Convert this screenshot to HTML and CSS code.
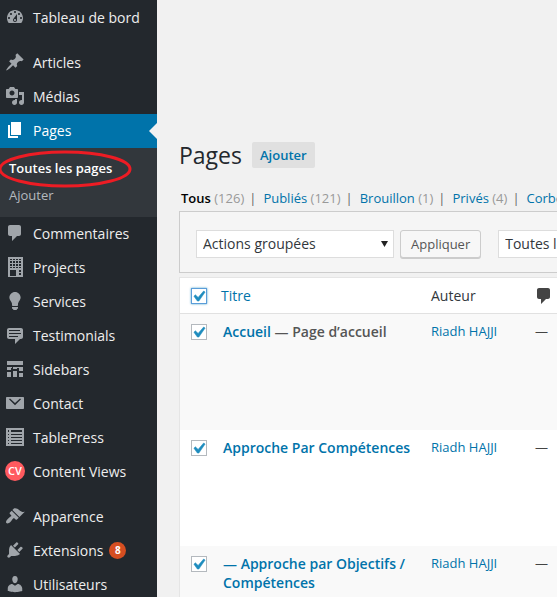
FILE: index.html
```html
<!DOCTYPE html>
<html lang="fr">
<head>
<meta charset="utf-8">
<title>Pages</title>
<meta name="viewport" content="width=device-width, initial-scale=1">
<link rel="stylesheet" href="styles.css">
</head>
<body>
<div class="layout">
  <nav class="menu" aria-label="Menu principal">
    <ul class="menu-list">
      <li><a class="item" href="#"><svg class="icon" viewBox="0 0 20 20"><path fill-rule="evenodd" d="M3.76 16h12.48c1.1-1.37 1.76-3.11 1.76-5 0-4.42-3.58-8-8-8s-8 3.58-8 8c0 1.89.66 3.63 1.76 5zM10 4c.55 0 1 .45 1 1s-.45 1-1 1-1-.45-1-1 .45-1 1-1zM6 6c.55 0 1 .45 1 1s-.45 1-1 1-1-.45-1-1 .45-1 1-1zm8 0c.55 0 1 .45 1 1s-.45 1-1 1-1-.45-1-1 .45-1 1-1zm-5.37 5.55L12 7v6c0 1.1-.9 2-2 2s-2-.9-2-2c0-.57.24-1.08.63-1.45zM4 10c.55 0 1 .45 1 1s-.45 1-1 1-1-.45-1-1 .45-1 1-1zm12 0c.55 0 1 .45 1 1s-.45 1-1 1-1-.45-1-1 .45-1 1-1zm-5 3c0-.55-.45-1-1-1s-1 .45-1 1 .45 1 1 1 1-.45 1-1z"/></svg>Tableau de bord</a></li>
      <li class="group"><a class="item" href="#"><svg class="icon" viewBox="0 0 20 20"><path d="M10.44 3.02l1.82-1.82 6.36 6.35-1.83 1.82c-1.05-.68-2.48-.57-3.41.36l-.75.75c-.92.93-1.04 2.35-.35 3.41l-1.83 1.82-2.41-2.41-2.8 2.79c-.42.42-3.38 2.71-3.8 2.29s1.86-3.39 2.28-3.81l2.79-2.79L4.1 9.36l1.83-1.82c1.05.69 2.48.57 3.4-.36l.75-.75c.93-.92 1.05-2.35.36-3.41z"/></svg>Articles</a></li>
      <li><a class="item" href="#"><svg class="icon" viewBox="0 0 20 20"><path fill-rule="evenodd" d="M13 11V4c0-.55-.45-1-1-1h-1.67L9 1H5L3.67 3H2c-.55 0-1 .45-1 1v7c0 .55.45 1 1 1h10c.55 0 1-.45 1-1zM7 4.5c1.38 0 2.5 1.12 2.5 2.5S8.38 9.5 7 9.5 4.5 8.38 4.5 7 5.62 4.5 7 4.5zM14 6h5v10.5c0 1.38-1.12 2.5-2.5 2.5S14 17.88 14 16.5s1.12-2.5 2.5-2.5c.17 0 .34.02.5.05V9h-3V6zm-4 8.05V13h2v3.5c0 1.38-1.12 2.5-2.5 2.5S7 17.88 7 16.5 8.12 14 9.5 14c.17 0 .34.02.5.05z"/></svg>Médias</a></li>
      <li>
        <a class="item current" href="#"><svg class="icon" viewBox="0 0 20 20"><path d="M6 15V2h10v13H6zm-1 1h8v2H3V5h2v11z"/></svg>Pages</a>
        <ul class="submenu">
          <li><a class="subitem active" href="#">Toutes les pages<svg class="ring" viewBox="0 0 132 38"><ellipse cx="65" cy="19" rx="65" ry="17"/></svg></a></li>
          <li><a class="subitem" href="#">Ajouter</a></li>
        </ul>
      </li>
      <li><a class="item" href="#"><svg class="icon" viewBox="0 0 20 20"><path d="M5 2h9c1.1 0 2 .9 2 2v7c0 1.1-.9 2-2 2h-2l-5 5v-5H5c-1.1 0-2-.9-2-2V4c0-1.1.9-2 2-2z"/></svg>Commentaires</a></li>
      <li><a class="item" href="#"><svg class="icon" viewBox="0 0 20 20"><path fill-rule="evenodd" d="M3 0h15v20H3zM5 2v1h2V2zM8 2v1h2V2zM11 2v1h2V2zM14 2v1h2V2zM5 4v2h2V4zM8 4v2h2V4zM11 4v2h2V4zM14 4v2h2V4zM5 7v2h2V7zM8 7v2h2V7zM11 7v2h2V7zM14 7v2h2V7zM5 10v1h2v-1zM8 10v1h2v-1zM11 10v1h2v-1zM14 10v1h2v-1zM5 13v6h6v-6zM14 13v2h2v-2zM14 16v2h2v-2z"/></svg>Projects</a></li>
      <li><a class="item" href="#"><svg class="icon" viewBox="0 0 20 20"><path d="M10 1c3.11 0 5.63 2.52 5.63 5.62 0 1.84-2.03 4.58-2.03 4.58-.33.44-.6 1.25-.6 1.8v1c0 .55-.45 1-1 1H8c-.55 0-1-.45-1-1v-1c0-.55-.27-1.36-.6-1.8 0 0-2.02-2.74-2.02-4.58C4.38 3.52 6.89 1 10 1zM7 16.87V16h6v.87c0 .62-.13 1.13-.75 1.13H12c0 .62-.4 1-1.02 1h-2c-.61 0-.98-.38-.98-1h-.25c-.62 0-.75-.51-.75-1.13z"/></svg>Services</a></li>
      <li><a class="item" href="#"><svg class="icon" viewBox="0 0 20 20"><path fill-rule="evenodd" d="M4 3h12c1.1 0 2 .9 2 2v7c0 1.1-.9 2-2 2h-1l-5 5v-5H4c-1.1 0-2-.9-2-2V5c0-1.1.9-2 2-2zm11 2H4v1h11V5zm1 3H4v1h12V8zm-3 3H4v1h9v-1z"/></svg>Testimonials</a></li>
      <li><a class="item" href="#"><svg class="icon" viewBox="0 0 20 20"><path d="M2 2h16v4H2zM2 8h4v3H2zM8 8h4v2H8zM14 8h4v4h-4zM2 13h4v5H2zM8 12h4v6H8zM14 14h4v4h-4zM6 8h1v1H6zM12 8h2v1h-2z"/></svg>Sidebars</a></li>
      <li><a class="item" href="#"><svg class="icon" viewBox="0 0 20 20"><path fill-rule="evenodd" d="M2 4h16c.6 0 1 .4 1 1v10c0 .6-.4 1-1 1H2c-.6 0-1-.4-1-1V5c0-.6.4-1 1-1zM4 6.200l6 6 6-6-1-.8-5 4.600-5-4.600z"/></svg>Contact</a></li>
      <li><a class="item" href="#"><svg class="icon" viewBox="0 0 20 20"><path fill-rule="evenodd" d="M1 1h18v18H1zM3 3v2h1V3zM6 3v2h11V3zM3 7v1h1V7zM6 7v1h11V7zM3 10v1h1v-1zM6 10v1h11v-1zM3 13v1h1v-1zM6 13v1h11v-1zM3 16v1h1v-1zM6 16v1h11v-1z"/></svg>TablePress</a></li>
      <li><a class="item" href="#"><span class="icon cv">CV</span>Content Views</a></li>
      <li class="group"><a class="item" href="#"><svg class="icon" viewBox="0 0 20 20"><path d="M14.48 11.06L7.41 3.99l1.5-1.5c.5-.56 2.3-.47 3.51.32 1.21.8 1.43 1.28 2.91 2.1 1.18.64 2.45 1.26 4.45.85zm-.71.71L6.7 4.7 4.93 6.47c-.39.39-.39 1.02 0 1.41l1.06 1.06c.39.39.39 1.03 0 1.42-.6.6-1.43 1.11-2.21 1.69-.35.26-.7.53-1.01.84C1.43 14.23.4 16.08 1.4 17.07c.99 1 2.84-.03 4.18-1.36.31-.31.58-.66.85-1.02.57-.78 1.08-1.61 1.69-2.21.39-.39 1.02-.39 1.41 0l1.06 1.06c.39.39 1.02.39 1.41 0z"/></svg>Apparence</a></li>
      <li><a class="item" href="#"><svg class="icon" viewBox="0 0 20 20"><path d="M13.11 4.36L9.87 7.6 8 5.73l3.24-3.24c.35-.34 1.05-.2 1.56.32.52.51.66 1.21.31 1.55zm-8 1.77l.91-1.12 9.01 9.01-1.19.84c-.71.71-2.63 1.16-3.82 1.16H6.14L4.9 17.26c-.59.59-1.54.59-2.12 0-.59-.58-.59-1.53 0-2.12l1.24-1.24v-3.88c0-1.13.4-3.19 1.09-3.89zm7.26 3.97l3.24-3.24c.34-.35 1.04-.21 1.55.31.52.51.66 1.21.31 1.55l-3.24 3.25z"/></svg>Extensions<span class="badge">8</span></a></li>
      <li><a class="item" href="#"><svg class="icon" viewBox="0 0 20 20"><path d="M10 9.25c-2.27 0-2.73-3.44-2.73-3.44C7 4.02 7.82 2 9.97 2c2.16 0 2.98 2.02 2.71 3.81 0 0-.41 3.44-2.68 3.44zm0 2.57L12.72 10c2.39 0 4.52 2.33 4.52 4.53v2.49s-3.65 1.13-7.24 1.13c-3.65 0-7.24-1.13-7.24-1.13v-2.49c0-2.25 1.94-4.48 4.47-4.48z"/></svg>Utilisateurs</a></li>
    </ul>
  </nav>

  <main class="content">
    <header class="heading">
      <h1>Pages</h1>
      <a class="add" href="#">Ajouter</a>
    </header>

    <ul class="filters">
      <li><a class="selected" href="#">Tous <span>(126)</span></a></li>
      <li><a href="#">Publiés <span>(121)</span></a></li>
      <li><a href="#">Brouillon <span>(1)</span></a></li>
      <li><a href="#">Privés <span>(4)</span></a></li>
      <li><a href="#">Corbeille</a></li>
    </ul>

    <form class="toolbar">
      <div class="picker">
        <select class="bulk" aria-label="Actions groupées"><option>Actions groupées</option></select>
        <svg class="arrow" viewBox="0 0 7 6"><path d="M0 0h7L3.5 6z"/></svg>
      </div>
      <button class="apply" type="button">Appliquer</button>
      <select class="dates" aria-label="Filtrer par date"><option>Toutes les dates</option></select>
    </form>

    <table class="pages">
      <colgroup><col class="col-check"><col class="col-title"><col class="col-author"><col></colgroup>
      <thead>
        <tr>
          <th scope="col"><input class="check focused" type="checkbox" aria-label="Tout sélectionner" checked></th>
          <th scope="col"><a href="#">Titre</a></th>
          <th scope="col">Auteur</th>
          <th scope="col"><svg class="bubble" viewBox="0 0 20 20" role="img" aria-label="Commentaires"><path d="M5 2h9c1.1 0 2 .9 2 2v7c0 1.1-.9 2-2 2h-2l-5 5v-5H5c-1.1 0-2-.9-2-2V4c0-1.1.9-2 2-2z"/></svg></th>
        </tr>
      </thead>
      <tbody>
        <tr>
          <td><input class="check" type="checkbox" aria-label="Sélectionner Accueil" checked></td>
          <td class="title"><a href="#">Accueil</a> — Page d’accueil</td>
          <td><a href="#">Riadh HAJJI</a></td>
          <td>—</td>
        </tr>
        <tr>
          <td><input class="check" type="checkbox" aria-label="Sélectionner Approche Par Compétences" checked></td>
          <td class="title"><a href="#">Approche Par Compétences</a></td>
          <td><a href="#">Riadh HAJJI</a></td>
          <td>—</td>
        </tr>
        <tr>
          <td><input class="check" type="checkbox" aria-label="Sélectionner Approche par Objectifs / Compétences" checked></td>
          <td class="title"><a href="#">— Approche par Objectifs / Compétences</a></td>
          <td><a href="#">Riadh HAJJI</a></td>
          <td>—</td>
        </tr>
      </tbody>
    </table>
  </main>
</div>
</body>
</html>
```
FILE: styles.css
```css
* {
  box-sizing: border-box;
}

body {
  margin: 0;
  background: #f1f1f1;
  color: #444;
  font: 13px/19px "Open Sans", sans-serif;
}

a {
  color: #0073aa;
  text-decoration: none;
}

ul {
  list-style: none;
  margin: 0;
  padding: 0;
}

.layout {
  display: flex;
  height: 100vh;
  overflow: hidden;
}

/* Side menu */
.menu {
  flex: 0 0 157px;
  background: #23282d;
  padding-top: 1px;
}

.group {
  margin-top: 11px;
}

.item {
  position: relative;
  display: flex;
  align-items: center;
  height: 34px;
  padding: 0 0 2px 5px;
  color: #eee;
  font-size: 14px;
}

.icon {
  flex: none;
  width: 20px;
  height: 20px;
  margin-right: 8px;
  fill: #a0a5aa;
}

.current {
  background: #0073aa;
  color: #fff;
}

.current .icon {
  fill: #fff;
}

.current::after {
  content: "";
  position: absolute;
  right: 0;
  top: 9px;
  border: 8px solid transparent;
  border-left-width: 0;
  border-right-color: #f1f1f1;
}

.cv {
  border-radius: 50%;
  background: #ff5a5f;
  color: #fff;
  font-size: 11px;
  font-weight: 600;
  line-height: 20px;
  text-align: center;
}

.badge {
  width: 17px;
  height: 17px;
  margin-left: 6px;
  border-radius: 50%;
  background: #d54e21;
  color: #fff;
  font-size: 10px;
  font-weight: 700;
  line-height: 17px;
  text-align: center;
}

.submenu {
  background: #32373c;
  padding: 7px 0 8px;
}

.subitem {
  position: relative;
  display: block;
  padding: 4px 9px;
  color: #b4b9be;
}

.active {
  color: #fff;
  font-weight: 600;
}

.ring {
  position: absolute;
  left: 0;
  top: -5px;
  width: 132px;
  height: 38px;
  fill: none;
  stroke: #ed1c24;
  stroke-width: 3px;
  overflow: visible;
}

/* Page list */
.content {
  flex: 1;
  min-width: 0;
  padding: 140px 0 0 22px;
  overflow: hidden;
}

.heading {
  display: flex;
  align-items: center;
  gap: 10px;
}

h1 {
  margin: 0;
  color: #23282d;
  font-size: 23px;
  font-weight: 400;
  line-height: 30px;
}

.add {
  padding: 4px 8px;
  border-radius: 2px;
  background: #e0e0e0;
  font-weight: 600;
  line-height: 18px;
}

.filters {
  display: flex;
  margin: 19px 0 3px 2px;
  white-space: nowrap;
}

.filters li + li::before {
  content: "|";
  margin: 0 7px 0 5px;
  color: #666;
}

.filters span {
  color: #999;
  font-weight: 400;
}

.filters .selected {
  color: #000;
  font-weight: 600;
}

.toolbar {
  display: flex;
  gap: 6px;
  margin-right: -20px;
  padding: 18px 16px 14px;
  border: 1px solid #ccc;
  background: #f5f5f5;
}

.picker {
  position: relative;
  flex: 0 0 198px;
}

select {
  appearance: none;
  height: 28px;
  padding: 0 6px;
  border: 1px solid #ddd;
  border-radius: 0;
  background: #fff;
  color: #32373c;
  font: 14px/26px "Open Sans", sans-serif;
}

.bulk {
  width: 100%;
}

.arrow {
  position: absolute;
  right: 6px;
  top: 11px;
  width: 7px;
  height: 6px;
  fill: #222;
}

.apply {
  flex: none;
  height: 28px;
  padding: 0 10px;
  border: 1px solid #ccc;
  border-radius: 3px;
  background: #f7f7f7;
  box-shadow: 0 1px 0 #ccc;
  color: #555;
  font: 13px/26px "Open Sans", sans-serif;
}

.dates {
  flex: none;
  width: 160px;
  margin-left: 11px;
}

.pages {
  width: calc(100% + 20px);
  margin-top: 4px;
  border: 1px solid #e5e5e5;
  border-spacing: 0;
  background: #fff;
  table-layout: fixed;
}

.col-check {
  width: 33px;
}

.col-title {
  width: 210px;
}

.col-author {
  width: 104px;
}

th {
  height: 36px;
  padding: 0 8px;
  border-bottom: 1px solid #e1e1e1;
  color: #32373c;
  font-size: 14px;
  font-weight: 400;
  text-align: left;
}

td {
  height: 116px;
  padding: 8px;
  vertical-align: top;
}

tbody tr:nth-child(odd) {
  background: #f9f9f9;
}

.pages th:first-child,
.pages td:first-child {
  padding-left: 11px;
  padding-right: 0;
}

.title {
  padding-left: 10px;
  padding-right: 0;
  color: #555;
  font-size: 14px;
  font-weight: 600;
}

.check {
  appearance: none;
  display: block;
  width: 16px;
  height: 16px;
  margin: 0;
  border: 1px solid #b4b9be;
  background: #fff;
}

td .check {
  margin-top: 2px;
}

.check:checked {
  background: #fff url("data:image/svg+xml,%3Csvg xmlns='http://www.w3.org/2000/svg' viewBox='4 3 13 13'%3E%3Cpath fill='%231e8cbe' stroke='%231e8cbe' stroke-width='.5' d='M14.83 4.89l1.34.94-5.81 8.38H9.02L5.78 9.67l1.34-1.25 2.57 2.4z'/%3E%3C/svg%3E") center / 14px 14px no-repeat;
}

.focused {
  border-color: #5b9dd9;
  box-shadow: 0 0 2px rgba(30, 140, 190, 0.8);
}

.bubble {
  display: block;
  width: 20px;
  height: 20px;
  margin-left: -1px;
  fill: #444;
}
```
